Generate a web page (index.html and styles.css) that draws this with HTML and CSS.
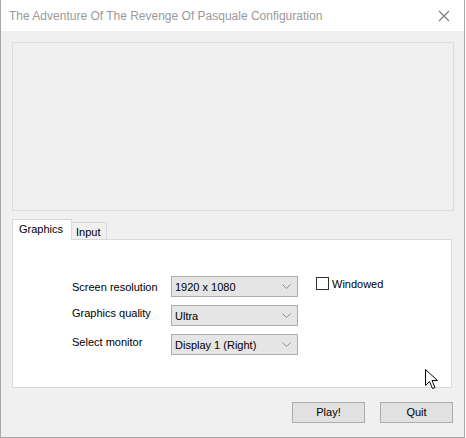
FILE: index.html
```html
<!DOCTYPE html>
<html>
<head>
<meta charset="utf-8">
<link rel="stylesheet" href="styles.css">
</head>
<body>
<div class="window">
  <div class="titlebar">
    <span class="title">The Adventure Of The Revenge Of Pasquale Configuration</span>
    <svg class="close" width="12" height="12" viewBox="0 0 12 12"><path d="M1 1 L11 11 M11 1 L1 11" stroke="#7a7a7a" stroke-width="1.1" fill="none"/></svg>
  </div>
  <div class="client">
    <div class="preview"></div>
    <div class="tabs">
      <div class="tab active">Graphics</div>
      <div class="tab">Input</div>
    </div>
    <div class="panel">
      <div class="form">
        <div class="label">Screen resolution</div>
        <div class="combo"><span>1920 x 1080</span><svg width="9" height="5" viewBox="0 0 9 5"><path d="M0.5 0.5 L4.5 4.5 L8.5 0.5" stroke="#8a8a8a" fill="none"/></svg></div>
        <label class="check"><span class="box"></span>Windowed</label>
        <div class="label lift">Graphics quality</div>
        <div class="combo"><span>Ultra</span><svg width="9" height="5" viewBox="0 0 9 5"><path d="M0.5 0.5 L4.5 4.5 L8.5 0.5" stroke="#8a8a8a" fill="none"/></svg></div>
        <div></div>
        <div class="label lift">Select monitor</div>
        <div class="combo"><span>Display 1 (Right)</span><svg width="9" height="5" viewBox="0 0 9 5"><path d="M0.5 0.5 L4.5 4.5 L8.5 0.5" stroke="#8a8a8a" fill="none"/></svg></div>
        <div></div>
      </div>
    </div>
    <div class="buttons">
      <div class="btn">Play!</div>
      <div class="btn">Quit</div>
    </div>
  </div>
  <svg class="cursor" width="14" height="22" viewBox="0 0 14 22"><path d="M0.5 0.5 L0.5 16.5 L4.5 12.5 L7.5 19.5 L10 18.5 L7 11.5 L12.5 11.5 Z" fill="#fff" stroke="#000" stroke-width="1" stroke-linejoin="miter"/></svg>
</div>
</body>
</html>
```

FILE: styles.css
```css
html, body {
  margin: 0;
  padding: 0;
  background: #ffffff;
}
body {
  font-family: "Liberation Sans", Arial, sans-serif;
  font-size: 11px;
  color: #000;
}
.window {
  position: relative;
  width: 463px;
  height: 437px;
  border-left: 1px solid #a8a8a8;
  border-right: 1px solid #a8a8a8;
  border-bottom: 1px solid #a8a8a8;
  display: flex;
  flex-direction: column;
  overflow: hidden;
}
.titlebar {
  height: 31px;
  background: #ffffff;
  display: flex;
  align-items: center;
  justify-content: space-between;
  padding: 0 14px 0 8px;
  flex: none;
}
.title {
  font-family: "Liberation Sans", Arial, sans-serif;
  font-size: 12px;
  color: #9a9a9a;
  margin-top: 1px;
}
.client {
  flex: 1;
  background: #f0f0f0;
  padding: 11px 10px 0 11px;
  display: flex;
  flex-direction: column;
}
.preview {
  height: 167px;
  border: 1px solid #dcdcdc;
  background: #f0f0f0;
}
.tabs {
  display: flex;
  align-items: flex-end;
  margin-top: 8px;
  height: 20px;
  position: relative;
  z-index: 1;
}
.tab {
  border: 1px solid #d9d9d9;
  border-bottom: none;
  background: #f0f0f0;
  height: 17px;
  line-height: 19px;
  padding: 0 5px 0 4px;
  box-sizing: border-box;
}
.tab.active {
  background: #ffffff;
  height: 21px;
  line-height: 18px;
  padding: 0 8px 0 6px;
  margin-bottom: -1px;
}
.tab + .tab { border-left: none; }
.panel {
  height: 149px;
  border: 1px solid #d9d9d9;
  background: #ffffff;
  margin-right: 2px;
  box-sizing: border-box;
  padding: 36px 0 0 59px;
}
.form {
  display: grid;
  grid-template-columns: 99px 127px auto;
  grid-auto-rows: 21px;
  row-gap: 8px;
  align-items: center;
}
.label.lift { margin-top: -5px; }
.combo {
  height: 21px;
  box-sizing: border-box;
  border: 1px solid #acacac;
  background: #e5e5e5;
  display: flex;
  align-items: center;
  justify-content: space-between;
  padding: 0 6px 0 3px;
}
.combo span { margin-top: 1px; }
.check {
  display: flex;
  align-items: center;
  margin-left: 18px;
  margin-top: -6px;
}
.box {
  width: 11px;
  height: 11px;
  border: 1px solid #333;
  background: #fff;
  margin-right: 3px;
}
.buttons {
  display: flex;
  justify-content: flex-end;
  gap: 15px;
  margin-top: 14px;
  padding-right: 1px;
}
.btn {
  width: 73px;
  height: 21px;
  box-sizing: border-box;
  border: 1px solid #adadad;
  background: #e1e1e1;
  text-align: center;
  line-height: 19px;
}
.cursor {
  position: absolute;
  left: 424px;
  top: 369px;
}
```
